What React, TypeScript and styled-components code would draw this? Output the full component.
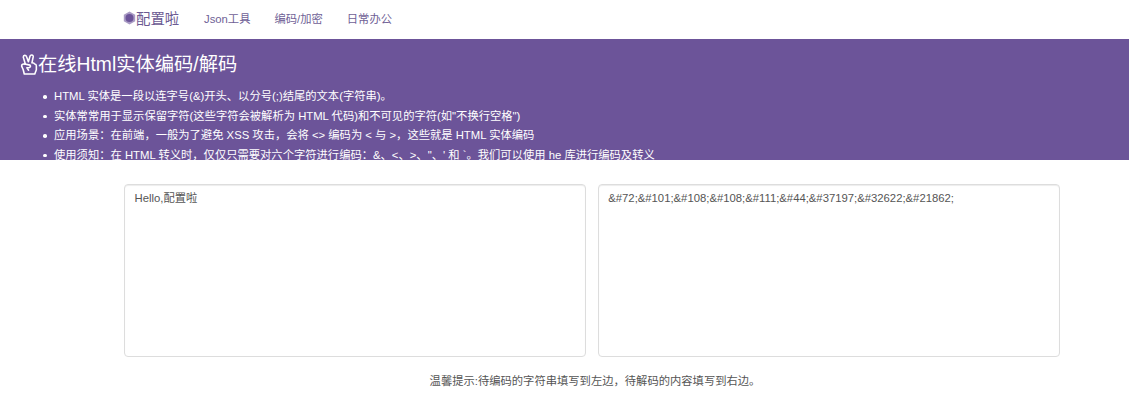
import React from "react"
import styled, { createGlobalStyle } from "styled-components"

const GlobalStyle = createGlobalStyle`
	html, body {
		margin: 0;
		padding: 0;
		background: #fff;
		font-family: "Liberation Sans", "Noto Sans CJK SC", sans-serif;
		font-size: 11.3px;
		color: #555;
	}
	* {
		box-sizing: border-box;
	}
`

const StyledNav = styled.nav`
	height: 39px;
	padding: 0 0 4px 123px;
	display: flex;
	align-items: center;
	background: #fff;
`
const StyledBrand = styled.a`
	display: flex;
	align-items: center;
	width: 81px;
	font-size: 14.4px;
	color: #6b5a92;
`
const StyledLink = styled.a`
	margin-right: 24px;
	font-size: 11.3px;
	color: #6f5f96;
`
const StyledHero = styled.section`
	height: 121px;
	overflow: hidden;
	padding: 12px 20px 0;
	background: #6c5499;
	color: #fff;
`
const StyledTitle = styled.h1`
	display: flex;
	align-items: center;
	margin: 0 0 9px;
	height: 27px;
	font-size: 19.3px;
	font-weight: 400;
	line-height: 27px;
`
const StyledList = styled.ul`
	margin: 0;
	padding: 0 0 0 34px;
	list-style: none;
	font-size: 11.3px;
	line-height: 19.6px;

	li {
		position: relative;
	}

	li::before {
		content: "";
		position: absolute;
		left: -11px;
		top: 8px;
		width: 3.5px;
		height: 3.5px;
		border-radius: 50%;
		background: #fff;
	}
`
const StyledEditors = styled.div`
	display: flex;
	gap: 11.5px;
	padding: 24px 69px 0 124px;
`
const StyledTextarea = styled.textarea`
	flex: 1;
	min-width: 0;
	height: 173px;
	padding: 5px 9.5px;
	border: 1px solid #ddd;
	border-radius: 4px;
	background: #fff;
	box-shadow: inset 0 1px 1px rgba(0, 0, 0, 0.075);
	color: #555;
	font-family: inherit;
	font-size: 11.3px;
	line-height: 17px;
	outline: none;
	resize: none;
`
const StyledTip = styled.p`
	margin: 16px 0 0;
	padding: 0 66px 0 127px;
	font-size: 11.3px;
	line-height: 17px;
	text-align: center;
`

const Logo = () => (
	<svg width="13" height="14" viewBox="0 0 13 14">
		<polygon points="6.5,0.5 12.2,3.7 12.2,10.3 6.5,13.5 0.8,10.3 0.8,3.7" fill="#a99bc4" />
		<circle cx="6.5" cy="7" r="4" fill="#6c5499" />
	</svg>
)

const PeaceHand = () => (
	<svg width="18" height="21" viewBox="0 0 16 20" fill="none" stroke="#fff" strokeWidth="1.5" strokeLinejoin="round" strokeLinecap="round">
		<path d="M3.5 19 L2.5 15 L1 11.5 Q1 9.5 3 9.5 L4.5 9.5 L2.6 3.2 Q2.4 1.4 4 1.2 Q5.2 1.2 5.6 2.4 L7.4 7.4 L9 2 Q9.5 0.8 10.8 1 Q12.2 1.4 12 2.8 L10.8 8.4 Q13 8.4 13.4 9.6 Q15 9.8 15 11.5 L15 15 L13.5 19 Z" />
		<path d="M3.8 9.6 L9 10.6 Q10 12 8.4 12.8 L6 13.2 L7.6 15.4" />
	</svg>
)

const App = () => {
	return (
		<>
			<GlobalStyle />
			<StyledNav>
				<StyledBrand>
					<Logo />
					配置啦
				</StyledBrand>
				<StyledLink>Json工具</StyledLink>
				<StyledLink>编码/加密</StyledLink>
				<StyledLink>日常办公</StyledLink>
			</StyledNav>
			<StyledHero>
				<StyledTitle>
					<PeaceHand />
					在线Html实体编码/解码
				</StyledTitle>
				<StyledList>
					<li>HTML 实体是一段以连字号(&amp;)开头、以分号(;)结尾的文本(字符串)。</li>
					<li>实体常常用于显示保留字符(这些字符会被解析为 HTML 代码)和不可见的字符(如"不换行空格")</li>
					<li>应用场景：在前端，一般为了避免 XSS 攻击，会将 &lt;&gt; 编码为 &lt; 与 &gt;，这些就是 HTML 实体编码</li>
					<li>使用须知：在 HTML 转义时，仅仅只需要对六个字符进行编码：&amp;、&lt;、&gt;、"、' 和 `。我们可以使用 he 库进行编码及转义</li>
				</StyledList>
			</StyledHero>
			<StyledEditors>
				<StyledTextarea readOnly value="Hello,配置啦" />
				<StyledTextarea readOnly value={"&#72;&#101;&#108;&#108;&#111;&#44;&#37197;&#32622;&#21862;"} />
			</StyledEditors>
			<StyledTip>温馨提示:待编码的字符串填写到左边，待解码的内容填写到右边。</StyledTip>
		</>
	)
}

export default App
